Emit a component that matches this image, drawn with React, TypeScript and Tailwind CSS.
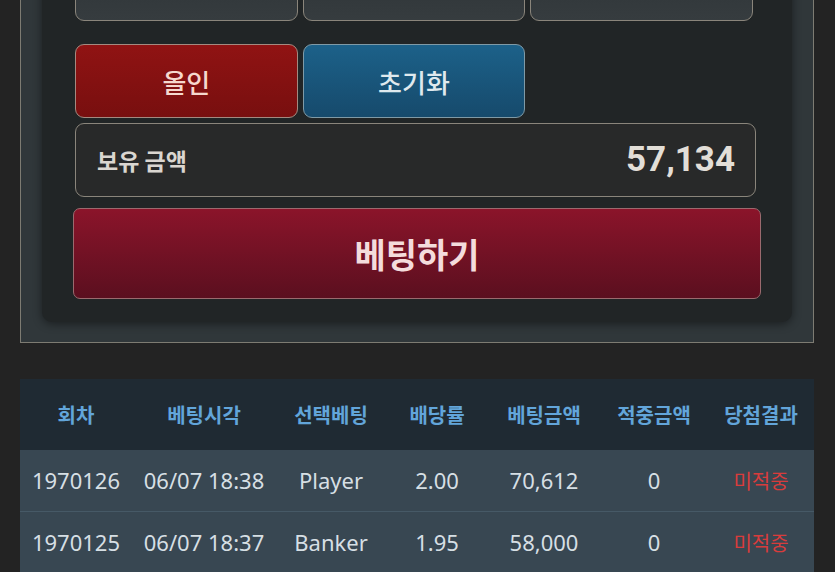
import React from 'react';

const rows = [
  { round: '1970126', time: '06/07 18:38', pick: 'Player', odds: '2.00', amount: '70,612', win: '0', result: '미적중' },
  { round: '1970125', time: '06/07 18:37', pick: 'Banker', odds: '1.95', amount: '58,000', win: '0', result: '미적중' },
];

const heads = ['회차', '베팅시각', '선택베팅', '배당률', '베팅금액', '적중금액', '당첨결과'];

const cols = 'grid grid-cols-[112px_144px_110px_102px_112px_108px_106px]';

export default function App() {
  return (
    <div
      className="h-[572px] overflow-hidden bg-[#232323]"
      style={{ fontFamily: '"Noto Sans", "Noto Sans CJK KR", sans-serif' }}
    >
      <div className="-mt-[103px]">
        {/* bet panel */}
        <div className="ml-[20px] w-[794px] border border-[#7d7b72] bg-[#30373a] px-[21px] pt-[20px] pb-[20px]">
          <div className="rounded-[10px] bg-[#212526] pt-[30px] pb-[23px] pl-[33px] pr-[36px] shadow-[0_2px_10px_rgba(0,0,0,0.45)]">
            <div className="grid w-[678px] grid-cols-3 gap-[5px]">
              <div className="h-[73px] rounded-[9px] border border-[#8a857b] bg-gradient-to-b from-[#2c3235] to-[#363c3f]" />
              <div className="h-[73px] rounded-[9px] border border-[#8a857b] bg-gradient-to-b from-[#2c3235] to-[#363c3f]" />
              <div className="h-[73px] rounded-[9px] border border-[#8a857b] bg-gradient-to-b from-[#2c3235] to-[#363c3f]" />
            </div>

            <div className="mt-[23px] grid w-[678px] grid-cols-3 gap-[5px]">
              <button
                className="flex h-[74px] items-center justify-center rounded-[9px] border border-[#a48a80] bg-gradient-to-b from-[#901313] to-[#780f0f] text-[26px] font-medium text-[#f6d8ce]"
                style={{ fontFamily: '"Noto Sans CJK KR", sans-serif' }}
              >
                올인
              </button>
              <button
                className="flex h-[74px] items-center justify-center rounded-[9px] border border-[#7f9aa6] bg-gradient-to-b from-[#1c6189] to-[#164a6c] text-[26px] font-medium text-[#dfe9ee]"
                style={{ fontFamily: '"Noto Sans CJK KR", sans-serif' }}
              >
                초기화
              </button>
            </div>

            <div className="mt-[5px] flex h-[74px] items-center justify-between rounded-[9px] border border-[#8a857b] bg-[#282929] pl-[21px] pr-[20px]">
              <span
                className="text-[23px] font-bold text-[#dad6d0]"
                style={{ fontFamily: '"Noto Sans CJK KR", sans-serif' }}
              >
                보유 금액
              </span>
              <span
                className="text-[35px] font-bold text-[#e2ded7]"
                style={{ fontFamily: 'Roboto, sans-serif' }}
              >
                57,134
              </span>
            </div>

            <button
              className="-ml-[2px] mt-[11px] flex h-[91px] w-[688px] items-center justify-center rounded-[7px] border border-[#9a6a6e] bg-gradient-to-b from-[#8b142a] to-[#5b0f1f] text-[34px] font-bold text-[#f4dcdc]"
              style={{ fontFamily: '"Noto Sans CJK KR", sans-serif' }}
            >
              베팅하기
            </button>
          </div>
        </div>

        {/* history table */}
        <div className="ml-[20px] mt-[36px] w-[794px]">
          <div className={`${cols} h-[71px] items-center bg-[#1f2a33]`}>
            {heads.map((h) => (
              <div
                key={h}
                className="text-center text-[20px] font-bold text-[#62a5da]"
                style={{ fontFamily: '"Noto Sans CJK KR", sans-serif' }}
              >
                {h}
              </div>
            ))}
          </div>
          {rows.map((r) => (
            <div
              key={r.round}
              className={`${cols} h-[62px] items-center border-b border-[#465966] bg-[#384752] text-[22px] text-[#d6dfe4]`}
            >
              <div className="text-center">{r.round}</div>
              <div className="text-center">{r.time}</div>
              <div className="text-center">{r.pick}</div>
              <div className="text-center">{r.odds}</div>
              <div className="text-center">{r.amount}</div>
              <div className="text-center">{r.win}</div>
              <div
                className="text-center text-[20px] text-[#d83c3c]"
                style={{ fontFamily: '"Noto Sans CJK KR", sans-serif' }}
              >
                {r.result}
              </div>
            </div>
          ))}
        </div>
      </div>
    </div>
  );
}
